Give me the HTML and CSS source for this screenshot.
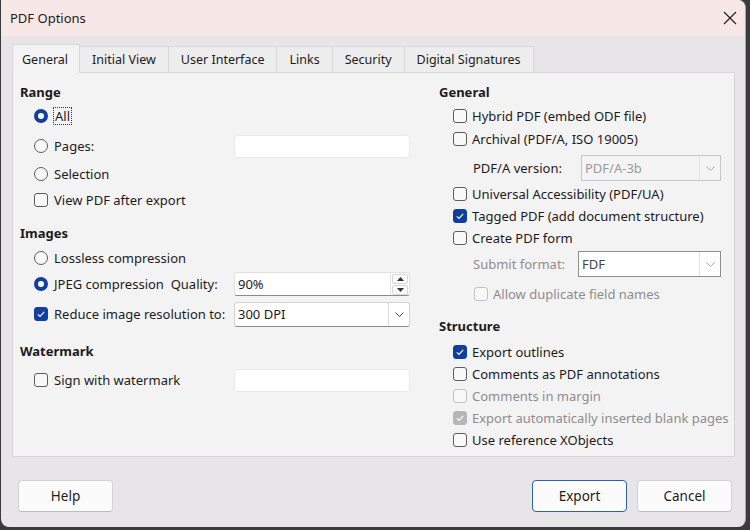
FILE: index.html
```html
<!DOCTYPE html>
<html>
<head>
<meta charset="utf-8">
<link rel="stylesheet" href="styles.css">
</head>
<body>
<div class="window">
  <div class="titlebar">
    <span class="title">PDF Options</span>
    <svg class="close" width="14" height="14" viewBox="0 0 14 14"><path d="M1 1 L13 13 M13 1 L1 13" stroke="#222" stroke-width="1.2" fill="none"/></svg>
  </div>
  <div class="tabs">
    <div class="tab active">General</div>
    <div class="tab">Initial View</div>
    <div class="tab">User Interface</div>
    <div class="tab">Links</div>
    <div class="tab">Security</div>
    <div class="tab">Digital Signatures</div>
  </div>
  <div class="panel">
    <div class="col left">
      <div class="hdr">Range</div>
      <div class="row opt g1"><span class="radio on"></span><span class="lbl focus">All</span></div>
      <div class="row opt field-row g4"><span class="item"><span class="radio"></span><span class="lbl">Pages:</span></span><span class="input"></span></div>
      <div class="row opt g2"><span class="radio"></span><span class="lbl">Selection</span></div>
      <div class="row opt"><span class="check"></span><span class="lbl">View PDF after export</span></div>

      <div class="hdr g10">Images</div>
      <div class="row opt g2"><span class="radio"></span><span class="lbl">Lossless compression</span></div>
      <div class="row opt field-row"><span class="item"><span class="radio on"></span><span class="lbl">JPEG compression&nbsp; Quality:</span></span>
        <span class="input spin"><span class="val">90%</span><span class="spinbtns"><span class="sb"><svg width="7" height="4" viewBox="0 0 7 4"><path d="M0 4 L3.5 0 L7 4Z" fill="#333"/></svg></span><span class="sb"><svg width="7" height="4" viewBox="0 0 7 4"><path d="M0 0 L3.5 4 L7 0Z" fill="#333"/></svg></span></span></span>
      </div>
      <div class="row opt field-row g4"><span class="item"><span class="check on"><svg width="14" height="14" viewBox="0 0 14 14"><path d="M3.8 7.3 L6 9.4 L10.2 4.8" stroke="#fff" stroke-width="1.1" fill="none"/></svg></span><span class="lbl">Reduce image resolution to:</span></span>
        <span class="input combo"><span class="val">300 DPI</span><span class="dd"><svg width="9" height="5" viewBox="0 0 9 5"><path d="M0.5 0.5 L4.5 4.5 L8.5 0.5" stroke="#444" stroke-width="1" fill="none"/></svg></span></span>
      </div>

      <div class="hdr g14">Watermark</div>
      <div class="row opt field-row g6"><span class="item"><span class="check"></span><span class="lbl">Sign with watermark</span></span><span class="input"></span></div>
    </div>

    <div class="col">
      <div class="hdr">General</div>
      <div class="row sm opt g3"><span class="check"></span><span class="lbl">Hybrid PDF (embed ODF file)</span></div>
      <div class="row sm opt g1"><span class="check"></span><span class="lbl">Archival (PDF/A, ISO 19005)</span></div>
      <div class="row sub pdfa g5"><span class="lbl">PDF/A version:</span>
        <span class="input combo disabled"><span class="val">PDF/A-3b</span><span class="dd"><svg width="9" height="5" viewBox="0 0 9 5"><path d="M0.5 0.5 L4.5 4.5 L8.5 0.5" stroke="#aaa" stroke-width="1" fill="none"/></svg></span></span>
      </div>
      <div class="row sm opt g2"><span class="check"></span><span class="lbl">Universal Accessibility (PDF/UA)</span></div>
      <div class="row sm opt"><span class="check on"><svg width="14" height="14" viewBox="0 0 14 14"><path d="M3.8 7.3 L6 9.4 L10.2 4.8" stroke="#fff" stroke-width="1.1" fill="none"/></svg></span><span class="lbl">Tagged PDF (add document structure)</span></div>
      <div class="row sm opt"><span class="check"></span><span class="lbl">Create PDF form</span></div>
      <div class="row sub submit g2"><span class="lbl dim">Submit format:</span>
        <span class="input combo semi"><span class="val">FDF</span><span class="dd"><svg width="9" height="5" viewBox="0 0 9 5"><path d="M0.5 0.5 L4.5 4.5 L8.5 0.5" stroke="#aaa" stroke-width="1" fill="none"/></svg></span></span>
      </div>
      <div class="row sm sub2 g6"><span class="check off"></span><span class="lbl dim">Allow duplicate field names</span></div>

      <div class="hdr g11">Structure</div>
      <div class="row sm opt g5"><span class="check on"><svg width="14" height="14" viewBox="0 0 14 14"><path d="M3.8 7.3 L6 9.4 L10.2 4.8" stroke="#fff" stroke-width="1.1" fill="none"/></svg></span><span class="lbl">Export outlines</span></div>
      <div class="row sm opt"><span class="check"></span><span class="lbl">Comments as PDF annotations</span></div>
      <div class="row sm opt"><span class="check off"></span><span class="lbl dim">Comments in margin</span></div>
      <div class="row sm opt"><span class="check offon"><svg width="14" height="14" viewBox="0 0 14 14"><path d="M3.8 7.3 L6 9.4 L10.2 4.8" stroke="#fff" stroke-width="1.1" fill="none"/></svg></span><span class="lbl dim">Export automatically inserted blank pages</span></div>
      <div class="row sm opt"><span class="check"></span><span class="lbl">Use reference XObjects</span></div>
    </div>
  </div>
  <div class="buttons">
    <button class="btn">Help</button>
    <span class="spacer"></span>
    <button class="btn primary">Export</button>
    <button class="btn">Cancel</button>
  </div>
</div>
</body>
</html>
```

FILE: styles.css
```css
html, body {
  margin: 0;
  padding: 0;
}
body {
  width: 750px;
  height: 530px;
  background: #3b3b3e;
  font-family: "Noto Sans", "DejaVu Sans", sans-serif;
  font-size: 13px;
  color: #1b1b1b;
  overflow: hidden;
}
.window {
  margin-left: 1px;
  width: 745px;
  height: 527px;
  background: #e7e5e7;
  border-radius: 0 8px 8px 8px;
  border-right: 1px solid #a9a7a9;
  box-sizing: border-box;
  overflow: hidden;
}
.titlebar {
  height: 36px;
  background: #f8e7e7;
  display: flex;
  align-items: center;
  padding-left: 9px;
  padding-right: 8px;
}
.title {
  font-size: 13px;
  flex: 1;
}
.tabs {
  display: flex;
  margin: 8px 0 0 11px;
  height: 28px;
  align-items: flex-end;
  position: relative;
  z-index: 1;
}
.tab {
  height: 26px;
  padding: 0 12px;
  display: flex;
  align-items: center;
  background: #eeedee;
  border: 1px solid #d9d8d9;
  border-left: none;
  border-bottom: none;
  box-sizing: border-box;
  font-size: 12.5px;
}
.tab.active {
  height: 29px;
  background: #f4f3f4;
  border-left: 1px solid #d9d8d9;
  margin-bottom: -1px;
  padding: 0 11px 0 9px;
}
.panel {
  margin: 0 10px 0 11px;
  height: 385px;
  box-sizing: border-box;
  border: 1px solid #d6d5d6;
  background: #f4f3f4;
  padding: 9px 0 0 7px;
  display: grid;
  grid-template-columns: 419px 1fr;
}
.col {
  display: flex;
  flex-direction: column;
}
.hdr {
  height: 20px;
  display: flex;
  align-items: center;
  font-weight: bold;
  font-size: 13px;
}
.row {
  height: 26px;
  display: flex;
  align-items: center;
}
.row.sm { height: 22px; }
.opt { padding-left: 14px; }
.sub { padding-left: 34px; height: 26px; }
.sub2 { padding-left: 35px; }
.field-row {
  display: grid;
  grid-template-columns: 200px 176px;
}
.item {
  display: flex;
  align-items: center;
}
.lbl {
  white-space: nowrap;
}
.dim { color: #8d8d8d; }
.focus {
  outline: 1px dotted #333;
  outline-offset: 0;
  padding: 0 1px;
  line-height: 16px;
}
.radio {
  width: 14px;
  height: 14px;
  box-sizing: border-box;
  border-radius: 50%;
  border: 1px solid #5d5d5d;
  background: #f7f7f7;
  margin-right: 6px;
  flex: none;
}
.radio.on {
  border: 4.5px solid #123f9e;
  background: #fff;
}
.check {
  width: 14px;
  height: 14px;
  box-sizing: border-box;
  border-radius: 3px;
  border: 1px solid #5d5d5d;
  background: #f8f8f8;
  margin-right: 5px;
  flex: none;
  display: flex;
}
.left .check { margin-right: 6px; }
.check svg { display: block; margin: -1px; }
.check.on {
  background: #123f9e;
  border-color: #123f9e;
}
.check.off {
  border-color: #c2c2c2;
}
.check.offon {
  background: #b6b6b6;
  border-color: #b6b6b6;
}
.input {
  height: 24px;
  box-sizing: border-box;
  background: #fff;
  border: 1px solid #e6e6e6;
  border-bottom: 1px solid #9b9b9b;
  border-radius: 3px;
  display: flex;
  align-items: center;
}
.row.opt .input:not(.spin):not(.combo) {
  border: 1px solid #e9e9e9;
  height: 23px;
}
.val {
  flex: 1;
  padding-left: 3px;
}
.spin {
  border: 1px solid #e0e0e0;
  border-bottom: 1px solid #8b8b8b;
}
.spinbtns {
  width: 18px;
  height: 22px;
  display: flex;
  flex-direction: column;
  border-left: 1px solid #e3e3e3;
}
.sb {
  flex: 1;
  display: flex;
  align-items: center;
  justify-content: center;
  border: 1px solid #d8d8d8;
  border-radius: 2px;
  margin: 1px 1px 0 1px;
  background: #f9f9f9;
}
.combo {
  height: 25px;
  border: 1px solid #d2d2d2;
  border-bottom: 1px solid #8b8b8b;
}
.dd {
  width: 20px;
  align-self: stretch;
  border-left: 1px solid #dcdcdc;
  display: flex;
  align-items: center;
  justify-content: center;
}
.pdfa {
  display: grid;
  grid-template-columns: 108px 140px;
  align-items: center;
}
.submit {
  display: grid;
  grid-template-columns: 105px 143px;
  align-items: center;
}
.combo.disabled {
  height: 26px;
  background: #f5f4f5;
  border: 1px solid #c6c6c6;
  border-radius: 0;
  color: #9a9a9a;
}
.combo.semi {
  height: 26px;
  background: #fff;
  border: 1px solid #8e8e8e;
  border-radius: 0;
  color: #444;
}
.combo.disabled .dd, .combo.semi .dd { border-left-color: #e4e4e4; }
.g1 { margin-top: 1px; }
.g2 { margin-top: 2px; }
.g3 { margin-top: 3px; }
.g4 { margin-top: 4px; }
.g5 { margin-top: 5px; }
.g6 { margin-top: 6px; }
.g10 { margin-top: 10px; }
.g11 { margin-top: 11px; }
.g14 { margin-top: 14px; }
.buttons {
  display: flex;
  margin: 23px 13px 0 17px;
  gap: 10px;
}
.spacer { flex: 1; }
.btn {
  width: 95px;
  height: 32px;
  border: 1px solid #d3d2d3;
  border-bottom-color: #bdbcbd;
  border-radius: 4px;
  background: #fbfbfb;
  font-family: "Noto Sans", "DejaVu Sans", sans-serif;
  font-size: 13.5px;
  color: #1b1b1b;
  padding: 0;
}
.btn.primary {
  border: 1.5px solid #2c5fb0;
}
```
